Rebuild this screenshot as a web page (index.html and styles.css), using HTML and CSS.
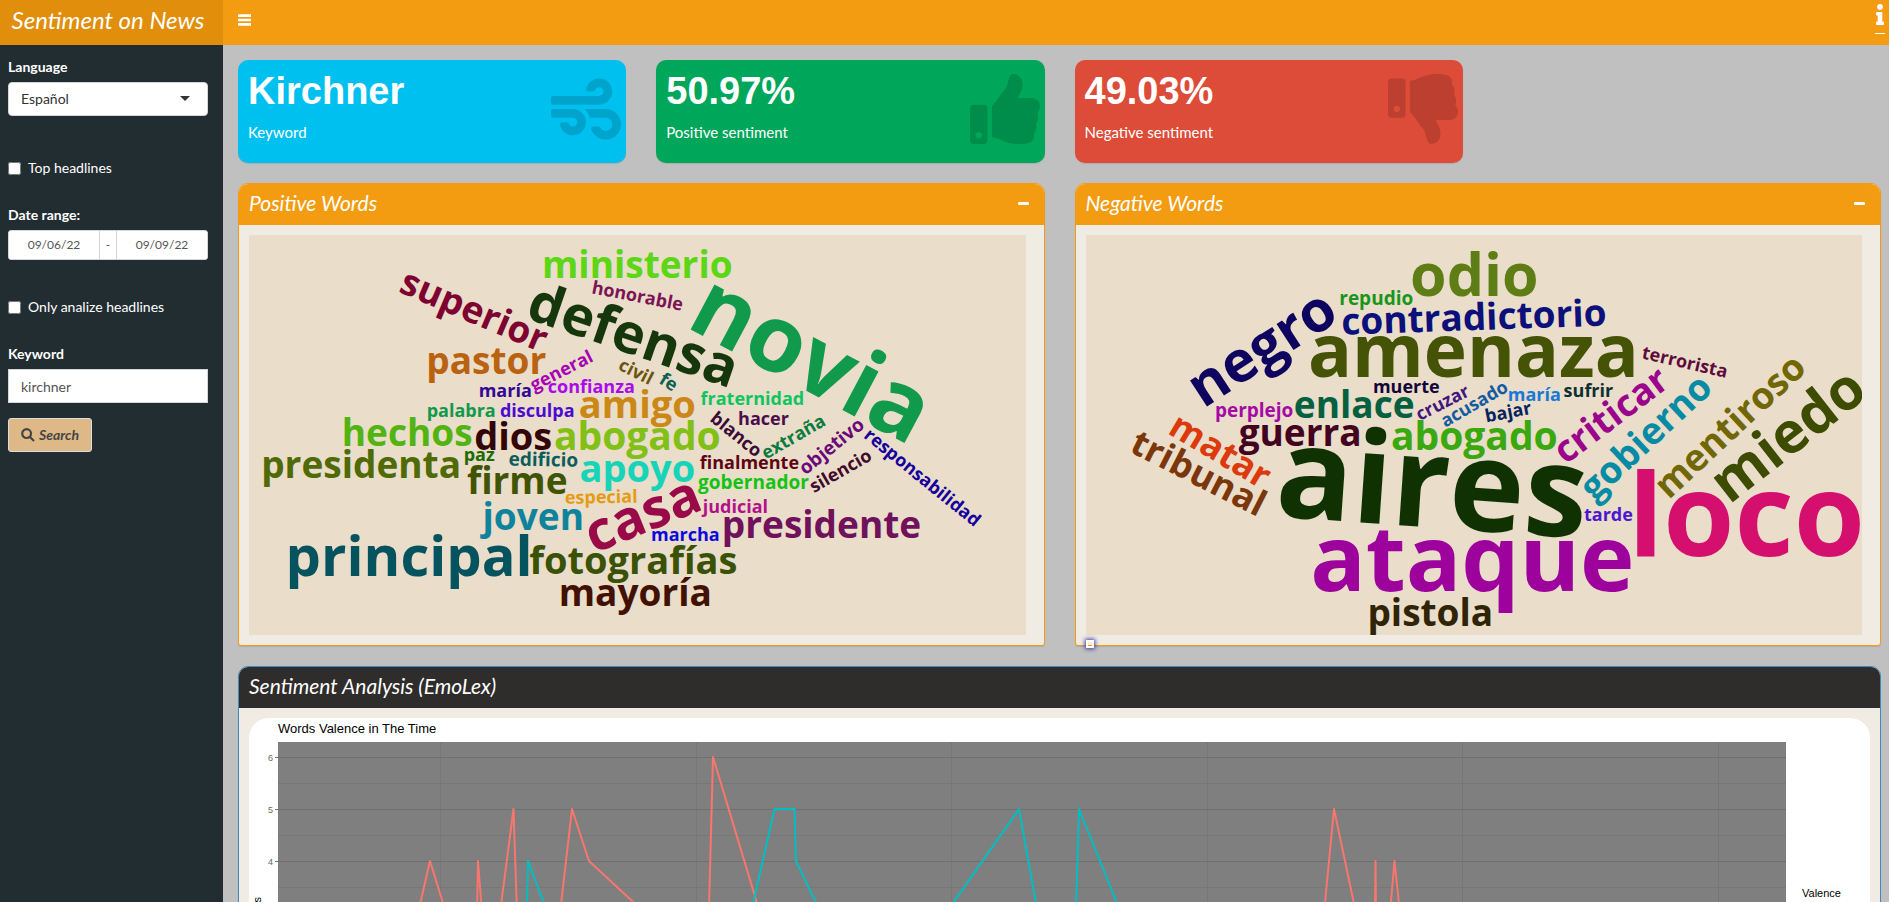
FILE: index.html
```html
<!DOCTYPE html>
<html lang="en">
<head>
<meta charset="utf-8">
<title>Sentiment on News</title>
<link rel="stylesheet" href="styles.css">
</head>
<body>
<div class="app">
  <header class="topbar">
    <a class="brand" href="#">Sentiment on News</a>
    <nav class="navbar">
      <button class="icon-btn" type="button" aria-label="Toggle navigation">
        <svg class="bars" viewBox="0 0 13 12"><path d="M0 .3h13v2.6H0zM0 4.700h13v2.600H0zM0 9.100h13v2.600H0z"/></svg>
      </button>
      <a class="info" href="#" aria-label="Information">
        <svg viewBox="0 0 192 512"><path d="M20 424.229h20V279.771H20c-11.046 0-20-8.954-20-20V212c0-11.046 8.954-20 20-20h112c11.046 0 20 8.954 20 20v212.229h20c11.046 0 20 8.954 20 20V492c0 11.046-8.954 20-20 20H20c-11.046 0-20-8.954-20-20v-47.771c0-11.046 8.954-20 20-20zM96 0C56.235 0 24 32.235 24 72s32.235 72 72 72 72-32.235 72-72S135.764 0 96 0z"/></svg>
      </a>
    </nav>
  </header>

  <div class="layout">
    <aside class="sidebar">
      <form class="filters">
        <div class="field">
          <label for="language">Language</label>
          <div class="select-wrap">
            <select id="language"><option>Español</option><option>English</option></select>
            <svg class="caret" viewBox="0 0 10 5"><path d="M0 0h10L5 5z"/></svg>
          </div>
        </div>
        <label class="check"><input type="checkbox"><span>Top headlines</span></label>
        <div class="field">
          <label for="date-from">Date range:</label>
          <div class="range">
            <input id="date-from" type="text" value="09/06/22">
            <span>-</span>
            <input type="text" value="09/09/22" aria-label="End date">
          </div>
        </div>
        <label class="check after-range"><input type="checkbox"><span>Only analize headlines</span></label>
        <div class="field">
          <label for="keyword">Keyword</label>
          <input id="keyword" class="text" type="text" value="kirchner">
        </div>
        <button class="search" type="button">
          <svg viewBox="0 0 14 14"><circle cx="5.6" cy="5.6" r="4.4"/><path d="M9 9l4 4"/></svg>
          <span>Search</span>
        </button>
      </form>
    </aside>

    <main class="content">
      <section class="values">
        <article class="value aqua">
          <div><h3>Kirchner</h3><p>Keyword</p></div>
          <svg viewBox="0 0 512 512"><path d="M156.7 256H16c-8.8 0-16 7.2-16 16v32c0 8.8 7.2 16 16 16h142.2c15.9 0 30.8 10.9 33.4 26.6 3.3 20-12.1 37.4-31.6 37.4-14.1 0-26.1-9.2-30.4-21.9-2.1-6.3-8.6-10.1-15.2-10.1H81.6c-9.8 0-17.7 8.8-15.9 18.4 8.6 44.1 47.6 77.6 94.2 77.6 57.1 0 102.7-50.1 95.2-108.6C249 291 205.4 256 156.7 256zM16 224h336c59.7 0 106.8-54.8 93.8-116.7-7.6-36.2-36.9-65.5-73.1-73.1-55.4-11.6-105.1 24.9-114.9 75.5-1.9 9.6 6.1 18.3 15.8 18.3h32.8c6.7 0 13.1-3.8 15.2-10.1C325.9 105.2 337.9 96 352 96c19.4 0 34.9 17.4 31.6 37.4-2.6 15.7-17.4 26.6-33.4 26.6H16c-8.8 0-16 7.2-16 16v32c0 8.8 7.2 16 16 16zm384 32H243.7c19.3 16.6 33.2 38.8 39.8 64H400c26.5 0 48 21.5 48 48s-21.5 48-48 48c-17.9 0-33.3-9.9-41.6-24.4-2.9-5-8.7-7.6-14.5-7.6h-33.8c-10.9 0-19 10.8-15.3 21.1 17.8 50.6 70.5 84.8 129.4 72.3 41.2-8.7 75.1-41.6 84.7-82.7C526 321.5 470.5 256 400 256z"/></svg>
        </article>
        <article class="value green">
          <div><h3>50.97%</h3><p>Positive sentiment</p></div>
          <svg viewBox="0 0 512 512"><path d="M104 224H24c-13.255 0-24 10.745-24 24v240c0 13.255 10.745 24 24 24h80c13.255 0 24-10.745 24-24V248c0-13.255-10.745-24-24-24zM64 472c-13.255 0-24-10.745-24-24s10.745-24 24-24 24 10.745 24 24-10.745 24-24 24zM384 81.452c0 42.416-25.97 66.208-33.277 94.548h101.723c33.397 0 59.397 27.746 59.553 58.098.084 17.938-7.546 37.249-19.439 49.197l-.11.11c9.836 23.337 8.237 56.037-9.308 79.469 8.681 25.895-.069 57.704-16.382 74.757 4.298 17.598 2.244 32.575-6.148 44.632C440.202 511.587 389.616 512 346.839 512l-2.845-.001c-48.287-.017-87.806-17.598-119.56-31.725-15.957-7.099-36.821-15.887-52.651-16.178-6.54-.12-11.783-5.457-11.783-11.998v-213.77c0-3.2 1.282-6.271 3.558-8.521 39.614-39.144 56.648-80.587 89.117-113.111 14.804-14.832 20.188-37.236 25.393-58.902C282.515 39.293 291.817 0 312 0c24 0 72 8 72 81.452z"/></svg>
        </article>
        <article class="value red">
          <div><h3>49.03%</h3><p>Negative sentiment</p></div>
          <svg viewBox="0 0 512 512"><path d="M0 56v240c0 13.255 10.745 24 24 24h80c13.255 0 24-10.745 24-24V56c0-13.255-10.745-24-24-24H24C10.745 32 0 42.745 0 56zm40 200c0-13.255 10.745-24 24-24s24 10.745 24 24-10.745 24-24 24-24-10.745-24-24zm272 256c-20.183 0-29.485-39.293-33.931-57.795-5.206-21.666-10.589-44.07-25.393-58.902-32.469-32.524-49.503-73.967-89.117-113.111a11.98 11.98 0 0 1-3.558-8.521V59.901c0-6.541 5.243-11.878 11.783-11.998 15.831-.29 36.694-9.079 52.651-16.178C256.189 17.598 295.709.017 343.995 0h2.844c42.777 0 93.363.413 113.774 29.737 8.392 12.057 10.446 27.034 6.148 44.632 16.312 17.053 25.063 48.863 16.382 74.757 17.544 23.432 19.143 56.132 9.308 79.469l.11.11c11.893 11.949 19.523 31.259 19.439 49.197-.156 30.352-26.157 58.098-59.553 58.098H350.723C358.03 364.34 384 388.132 384 430.548 384 504 336 512 312 512z"/></svg>
        </article>
      </section>

      <section class="clouds">
        <article class="box orange">
          <header class="box-head"><h2>Positive Words</h2><button class="icon-btn" type="button" aria-label="Collapse"><svg class="minus" viewBox="0 0 11 3"><rect width="11" height="3" rx="1"/></svg></button></header>
          <div class="box-body">
            <svg class="cloud" viewBox="0 0 776 400">
              <text transform="translate(388 43)" font-size="37" fill="#5cd615">ministerio</text>
              <text transform="translate(220 87) rotate(23)" font-size="37" fill="#7e0331">superior</text>
              <text transform="translate(387 67) rotate(11)" font-size="18" fill="#7a1455">honorable</text>
              <text transform="translate(378 118) rotate(19)" font-size="55" fill="#16370c">defensa</text>
              <text transform="translate(548 151) rotate(28)" font-size="93" fill="#119a4c">novia</text>
              <text transform="translate(237 139)" font-size="37" fill="#b9620f">pastor</text>
              <text transform="translate(315 141) rotate(-27)" font-size="18" fill="#a601b4">general</text>
              <text transform="translate(384 142) rotate(27)" font-size="18" fill="#6b5310">civil</text>
              <text transform="translate(416 152) rotate(32)" font-size="18" fill="#0c6050">fe</text>
              <text transform="translate(256 162)" font-size="18" fill="#330698">maría</text>
              <text transform="translate(342 158)" font-size="18" fill="#ab0bec">confianza</text>
              <text transform="translate(212 182)" font-size="18" fill="#10994a">palabra</text>
              <text transform="translate(288 182)" font-size="18" fill="#4d0bd0">disculpa</text>
              <text transform="translate(388 183)" font-size="38" fill="#cc8816">amigo</text>
              <text transform="translate(503 170)" font-size="18" fill="#0ec55f">fraternidad</text>
              <text transform="translate(158 211)" font-size="37" fill="#52b411">hechos</text>
              <text transform="translate(264 215)" font-size="38" fill="#330505">dios</text>
              <text transform="translate(388 215)" font-size="39" fill="#82c017">abogado</text>
              <text transform="translate(483 204) rotate(39)" font-size="18" fill="#3b0b33">blanco</text>
              <text transform="translate(514 190)" font-size="18" fill="#4b0d4b">hacer</text>
              <text transform="translate(547 207) rotate(-30)" font-size="18" fill="#0c7b3f">extraña</text>
              <text transform="translate(586 216) rotate(-39)" font-size="19" fill="#6a0a78">objetivo</text>
              <text transform="translate(669 247) rotate(39)" font-size="18" fill="#15019b">responsabilidad</text>
              <text transform="translate(112 243)" font-size="37" fill="#506a05">presidenta</text>
              <text transform="translate(230 226)" font-size="18" fill="#206a05">paz</text>
              <text transform="translate(294 231) rotate(1)" font-size="19" fill="#0b5c5c">edificio</text>
              <text transform="translate(388 247)" font-size="38" fill="#17d4b8">apoyo</text>
              <text transform="translate(500 234)" font-size="18" fill="#5e0614">finalmente</text>
              <text transform="translate(504 254)" font-size="19" fill="#16c314">gobernador</text>
              <text transform="translate(594 241) rotate(-30)" font-size="18" fill="#420a2c">silencio</text>
              <text transform="translate(268 259)" font-size="37" fill="#405503">firme</text>
              <text transform="translate(352 268) rotate(-1)" font-size="18" fill="#e39c12">especial</text>
              <text transform="translate(284 295)" font-size="37" fill="#0f839c">joven</text>
              <text transform="translate(400 296) rotate(-22)" font-size="54" fill="#9b0a48">casa</text>
              <text transform="translate(486 278)" font-size="18" fill="#b2118a">judicial</text>
              <text transform="translate(572 303)" font-size="37" fill="#70115b">presidente</text>
              <text transform="translate(436 306)" font-size="18" fill="#0a0ae0">marcha</text>
              <text transform="translate(160 341)" font-size="56" fill="#05535f">principal</text>
              <text transform="translate(384 339)" font-size="38" fill="#3a5206">fotografías</text>
              <text transform="translate(386 371)" font-size="37" fill="#431101">mayoría</text>
            </svg>
          </div>
        </article>

        <article class="box orange">
          <header class="box-head"><h2>Negative Words</h2><button class="icon-btn" type="button" aria-label="Collapse"><svg class="minus" viewBox="0 0 11 3"><rect width="11" height="3" rx="1"/></svg></button></header>
          <div class="box-body">
            <svg class="cloud" viewBox="0 0 776 400">
              <text transform="translate(388 61)" font-size="59" fill="#5e7d15">odio</text>
              <text transform="translate(290 70)" font-size="19" fill="#1a951a">repudio</text>
              <text transform="translate(186 129) rotate(-33)" font-size="57" fill="#0e035f">negro</text>
              <text transform="translate(388 95) rotate(-2)" font-size="37" fill="#0c107b">contradictorio</text>
              <text transform="translate(387 142)" font-size="73" fill="#445306">amenaza</text>
              <text transform="translate(597 133) rotate(13)" font-size="18" fill="#5e0b3c">terrorista</text>
              <text transform="translate(320 158)" font-size="18" fill="#140538">muerte</text>
              <text transform="translate(168 182)" font-size="19" fill="#a40aa4">perplejo</text>
              <text transform="translate(268 183)" font-size="37" fill="#056040">enlace</text>
              <text transform="translate(359 173) rotate(-27)" font-size="18" fill="#42157f">cruzar</text>
              <text transform="translate(391 174) rotate(-30)" font-size="18" fill="#145ba0">acusado</text>
              <text transform="translate(448 166)" font-size="18" fill="#1a78d6">maría</text>
              <text transform="translate(502 162)" font-size="18" fill="#0d3032">sufrir</text>
              <text transform="translate(423 183) rotate(-11)" font-size="18" fill="#06245c">bajar</text>
              <text transform="translate(532 190) rotate(-37)" font-size="37" fill="#9a058c">criticar</text>
              <text transform="translate(568 211) rotate(-43)" font-size="37" fill="#058ba4">gobierno</text>
              <text transform="translate(652 200) rotate(-43)" font-size="37" fill="#716805">mentiroso</text>
              <text transform="translate(713 215) rotate(-38)" font-size="57" fill="#3d4c01">miedo</text>
              <text transform="translate(128 226) rotate(31)" font-size="36" fill="#dc3a0c">matar</text>
              <text transform="translate(107 249) rotate(27)" font-size="36" fill="#7b370a">tribunal</text>
              <text transform="translate(214 211)" font-size="37" fill="#420220">guerra</text>
              <text transform="translate(388 215)" font-size="39" fill="#3aa80f">abogado</text>
              <text transform="translate(343 292) rotate(4)" font-size="127" fill="#103202">aires</text>
              <text transform="translate(386 356)" font-size="92" fill="#9d029c">ataque</text>
              <text transform="translate(344 391)" font-size="37" fill="#2f2404">pistola</text>
              <text transform="translate(522 286)" font-size="18" fill="#4b17d0">tarde</text>
              <text transform="translate(660 321)" font-size="115" fill="#d40f6d">loco</text>
            </svg>
          </div>
          <span class="marker"></span>
        </article>
      </section>

      <section class="box blue">
        <header class="box-head dark"><h2>Sentiment Analysis (EmoLex)</h2></header>
        <div class="box-body">
          <svg class="chart" viewBox="0 0 1621 400">
            <text class="chart-title" x="29" y="15">Words Valence in The Time</text>
            <rect x="29" y="24" width="1508" height="346" fill="#7f7f7f"/>
            <path class="minor" d="M29 65.500H1537M29 117.500H1537M29 169.500H1537M29 221.500H1537M191.500 24V370M447.500 24V370M702.500 24V370M958.500 24V370M1213.500 24V370M1469.500 24V370"/>
            <path class="major" d="M29 39.500H1537M29 91.500H1537M29 143.500H1537M29 195.500H1537"/>
            <path class="tick" d="M26 39.500h3M26 91.500h3M26 143.500h3"/>
            <g class="tick-label"><text x="24" y="43">6</text><text x="24" y="95">5</text><text x="24" y="147">4</text></g>
            <path class="line neg" d="M169 195L181 143L197 195M228 195L229 143L233 195M251 195L264.500 91L268 195M311 195L323 91L340 143L396 195M460 190L464 39L511 195M1075 195L1085 91L1107 195M1126 190L1126.500 143L1127 190M1141 195L1145.500 143L1151 195"/>
            <path class="line pos" d="M278 190L279 143L297 191M502 195L525.500 91H545.500L547 143L570 191M697 195L770 91L788 191M827 190L830 91L872 195"/>
            <text class="axis" transform="translate(12 179) rotate(-90)">Words</text>
            <text class="legend" x="1553" y="179">Valence</text>
          </svg>
        </div>
      </section>
    </main>
  </div>
</div>
</body>
</html>
```
FILE: styles.css
```css
* { box-sizing: border-box; }

body {
  margin: 0;
  background: #c0c0c0;
  color: #333;
  font-family: Lato, "Liberation Sans", sans-serif;
  font-size: 14px;
  line-height: 20px;
}

h2, h3, p { margin: 0; }

.app {
  display: flex;
  flex-direction: column;
  height: 100vh;
  overflow: hidden;
}

/* Top bar */
.topbar { display: flex; flex: none; height: 45px; }

.brand {
  width: 223px;
  padding-right: 7px;
  background: #e08e0b;
  color: #fff;
  font-size: 24px;
  font-style: italic;
  line-height: 40px;
  text-align: center;
  text-decoration: none;
  white-space: nowrap;
}

.navbar {
  display: flex;
  flex: 1;
  justify-content: space-between;
  padding: 4px 4px 0 15px;
  background: #f39c12;
}

.icon-btn {
  display: flex;
  align-items: center;
  padding: 0;
  border: 0;
  background: none;
}

.icon-btn svg { fill: #fff; }
.navbar .icon-btn { height: 32px; }
.bars { width: 13px; height: 12px; }
.minus { width: 11px; height: 3px; }

.info {
  height: 30px;
  padding: 0 1px;
  border-bottom: 1px solid #fff;
}

.info svg { display: block; width: 8px; height: 21px; fill: #fff; }

/* Sidebar */
.layout { display: flex; flex: 1; min-height: 0; }

.sidebar {
  flex: none;
  width: 223px;
  padding: 12px 15px 0 8px;
  background: #222d32;
  color: #fff;
}

.filters { display: flex; flex-direction: column; align-items: stretch; }
.field { display: flex; flex-direction: column; gap: 5px; }
.field > label { font-weight: 700; }
.select-wrap { position: relative; }

.select-wrap select,
.text {
  width: 100%;
  height: 34px;
  padding: 0 12px;
  border: 1px solid #d2d6de;
  background: #fff;
  color: #555;
  font: inherit;
}

.select-wrap select { appearance: none; border-radius: 4px; color: #333; }

.caret {
  position: absolute;
  top: 14px;
  right: 18px;
  width: 10px;
  height: 5px;
  fill: #333;
}

.check {
  display: flex;
  align-items: center;
  gap: 7px;
  margin: 42px 0 27px;
  white-space: nowrap;
}

.check input { width: 13px; height: 13px; margin: 0; }
.check.after-range { margin-top: 37px; }

.range {
  display: flex;
  height: 30px;
  overflow: hidden;
  border: 1px solid #d2d6de;
  border-radius: 3px;
  background: #fff;
  color: #555;
  font-size: 12px;
}

.range input {
  flex: 1;
  min-width: 0;
  border: 0;
  color: #555;
  font: inherit;
  text-align: center;
}

.range span {
  width: 18px;
  border: solid #d2d6de;
  border-width: 0 1px;
  line-height: 28px;
  text-align: center;
}

.search {
  display: flex;
  align-items: center;
  align-self: flex-start;
  gap: 4px;
  height: 34px;
  margin-top: 15px;
  padding: 0 12px;
  border: 1px solid #ddd;
  border-radius: 3px;
  background: #deb887;
  color: #444;
  font: inherit;
  font-style: italic;
  font-weight: 700;
}

.search svg {
  width: 14px;
  height: 14px;
  fill: none;
  stroke: #444;
  stroke-width: 2.2;
}

/* Content */
.content {
  display: flex;
  flex: 1;
  flex-direction: column;
  gap: 20px;
  min-width: 0;
  padding: 15px 8px 0 15px;
}

.values {
  display: grid;
  flex: none;
  grid-template-columns: repeat(4, 1fr);
  column-gap: 30px;
}

.value {
  display: flex;
  justify-content: space-between;
  min-height: 103px;
  padding: 10px 5px 10px 10px;
  border-radius: 10px;
  box-shadow: 0 1px 1px rgba(0, 0, 0, .1);
  color: #fff;
}

.value h3 {
  margin-bottom: 10px;
  font-family: "Liberation Sans", sans-serif;
  font-size: 38px;
  line-height: 42px;
}

.value p { font-size: 15px; line-height: 21px; }
.value svg { width: 70px; height: 70px; margin-top: 4px; fill: rgba(0, 0, 0, .15); }
.aqua { background: #00c0ef; }
.green { background: #00a65a; }
.red { background: #dd4b39; }

.clouds {
  display: grid;
  flex: none;
  grid-template-columns: 1fr 1fr;
  column-gap: 30px;
}

.box {
  position: relative;
  flex: none;
  border: 1px solid;
  border-radius: 10px 10px 3px 3px;
  background: #f0ece4;
  box-shadow: 0 1px 1px rgba(0, 0, 0, .1);
}

.box.orange { border-color: #f39c12; }
.box.blue { border-color: #3c8dbc; }

.box-head {
  display: flex;
  justify-content: space-between;
  padding: 6px 15px 9px 10px;
  border-radius: 9px 9px 0 0;
  background: #f39c12;
  color: #fff;
}

.box-head.dark { background: #2f2d2b; }

.box-head h2 {
  font-size: 21px;
  font-style: italic;
  font-weight: 400;
  line-height: 26px;
}

.box-body { padding: 10px; }

.cloud {
  display: block;
  width: 99%;
  background: #eaddca;
  font-family: "Open Sans", "Noto Sans", sans-serif;
  font-weight: 700;
  text-anchor: middle;
}

.marker {
  position: absolute;
  bottom: -3px;
  left: 10px;
  width: 8px;
  height: 8px;
  border: 2px solid #fff;
  box-shadow: 0 0 4px 1px #3a35a0;
}

/* Valence chart */
.chart {
  display: block;
  width: 100%;
  border-radius: 20px;
  background: #fff;
  font-family: "Liberation Sans", sans-serif;
}

.chart-title { font-size: 13px; fill: #000; }
.major { fill: none; stroke: #6f6f6f; stroke-width: 1; }
.minor { fill: none; stroke: #777; stroke-width: 1; }
.tick { stroke: #777; }
.tick-label { font-size: 9px; fill: #666; text-anchor: end; }
.line { fill: none; stroke-width: 2; stroke-linejoin: round; }
.neg { stroke: #f8766d; }
.pos { stroke: #00bfc4; }
.legend { font-size: 11px; }
.axis { font-size: 11px; text-anchor: end; }
```
